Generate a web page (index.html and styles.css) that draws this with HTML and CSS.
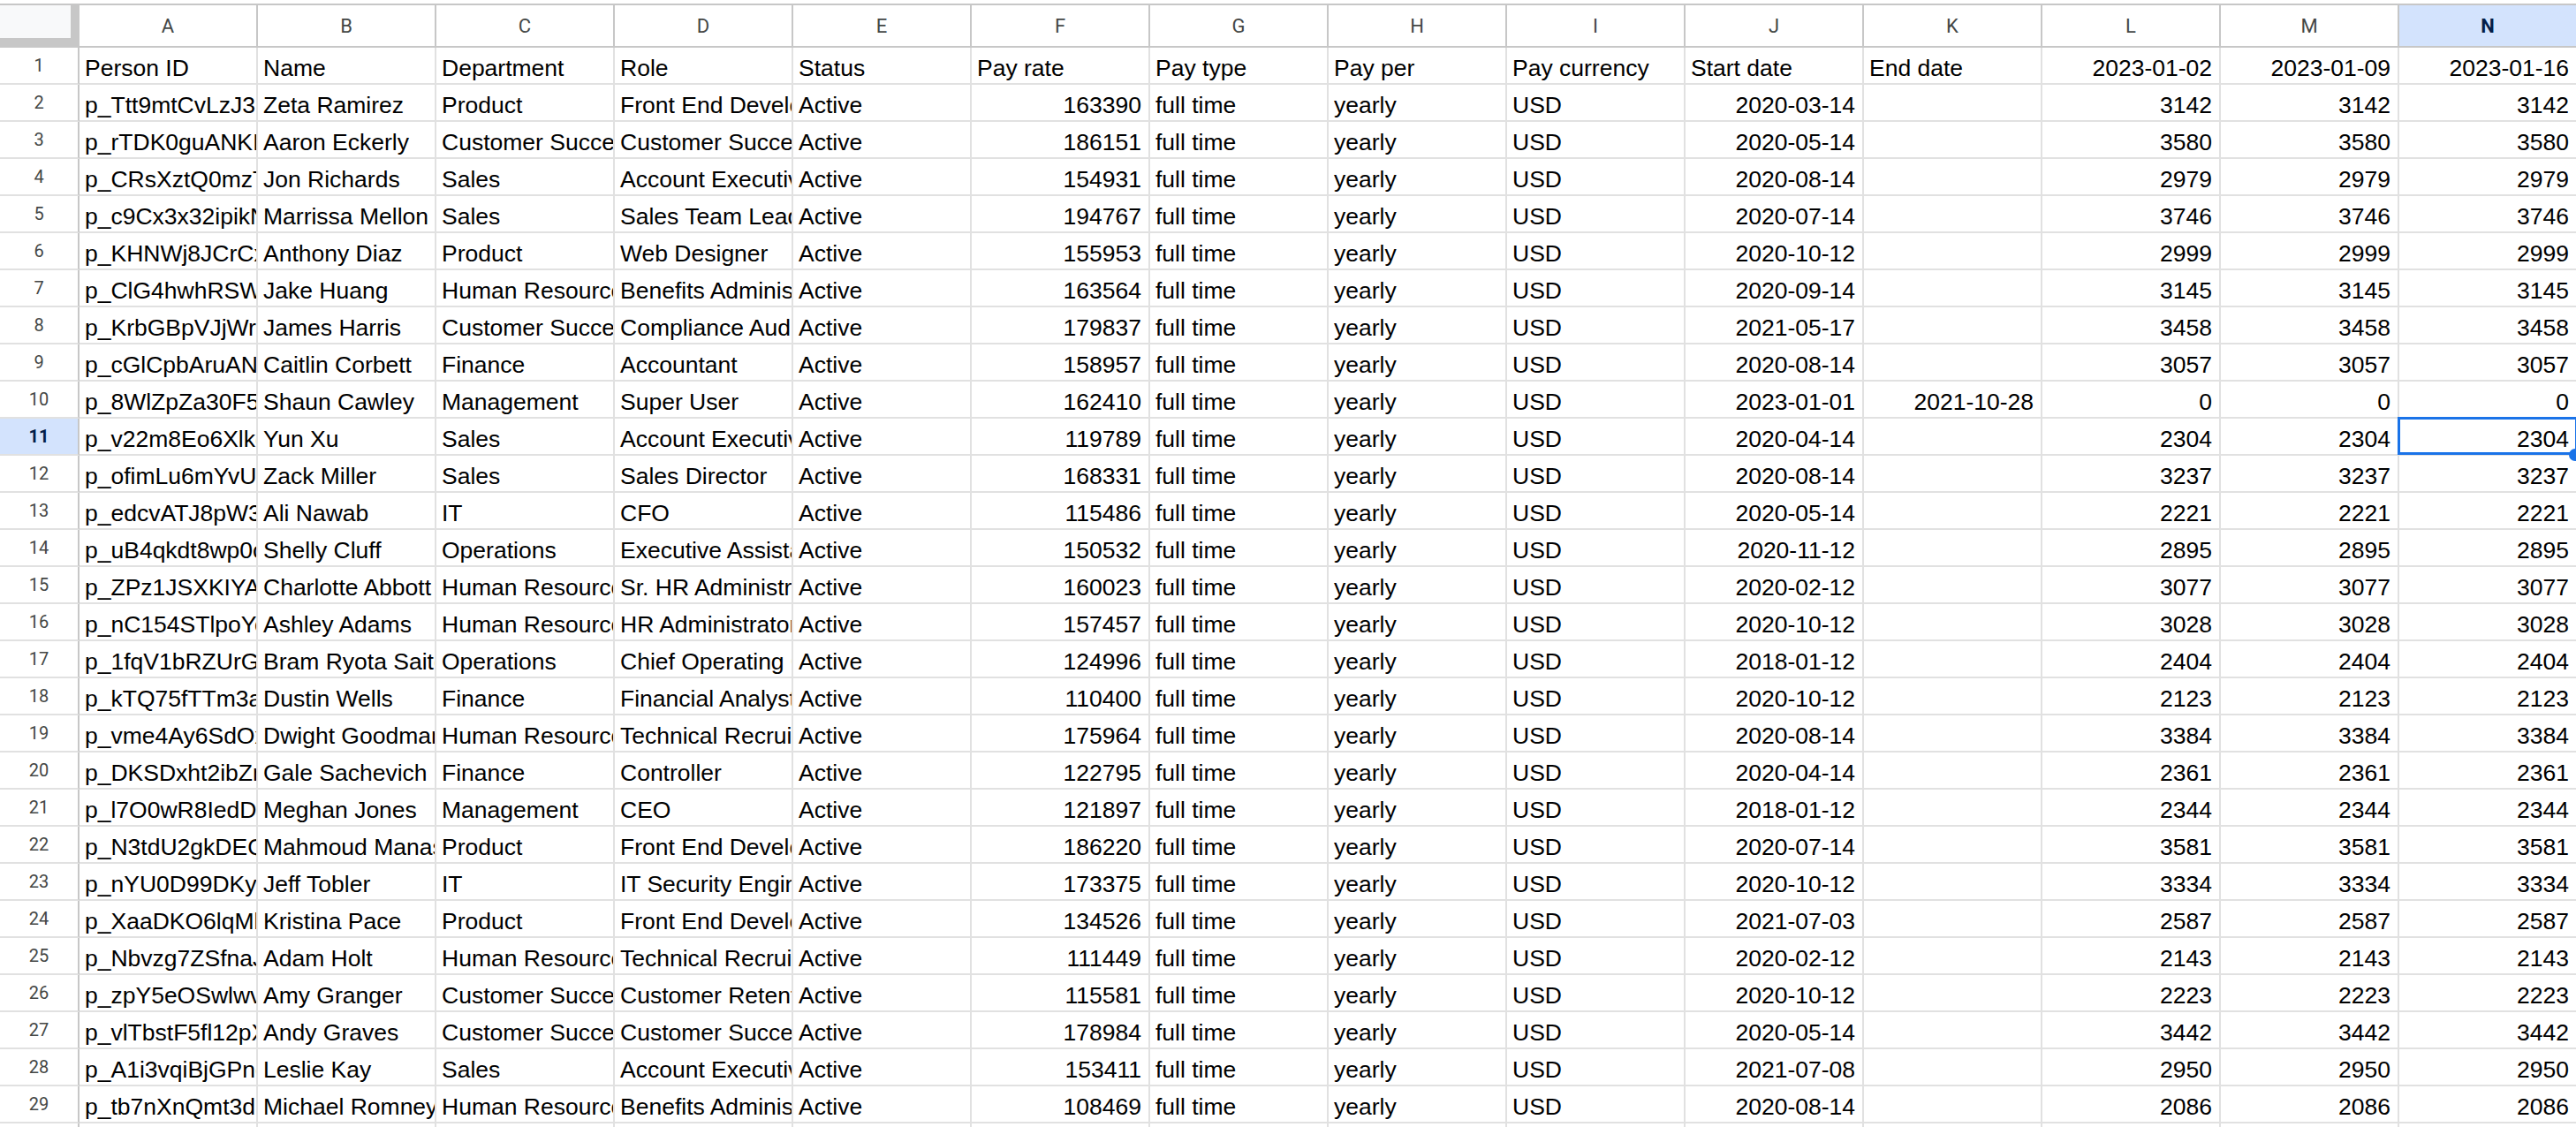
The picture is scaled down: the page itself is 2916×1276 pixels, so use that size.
FILE: index.html
```html
<!DOCTYPE html>
<html>
<head>
<meta charset="utf-8">
<title>Sheet</title>
<link rel="stylesheet" href="styles.css">
</head>
<body>
<div class="sheet">
<div class="corner"></div><div class="colhead">A</div><div class="colhead">B</div><div class="colhead">C</div><div class="colhead">D</div><div class="colhead">E</div><div class="colhead">F</div><div class="colhead">G</div><div class="colhead">H</div><div class="colhead">I</div><div class="colhead">J</div><div class="colhead">K</div><div class="colhead">L</div><div class="colhead">M</div><div class="colhead active-head">N</div>

<div class="rownum">1</div><div class="cell">Person ID</div><div class="cell">Name</div><div class="cell">Department</div><div class="cell">Role</div><div class="cell">Status</div><div class="cell">Pay rate</div><div class="cell">Pay type</div><div class="cell">Pay per</div><div class="cell">Pay currency</div><div class="cell">Start date</div><div class="cell">End date</div><div class="cell num">2023-01-02</div><div class="cell num">2023-01-09</div><div class="cell num">2023-01-16</div>

<div class="rownum">2</div><div class="cell">p_Ttt9mtCvLzJ3kQ</div><div class="cell">Zeta Ramirez</div><div class="cell">Product</div><div class="cell">Front End Developer</div><div class="cell">Active</div><div class="cell num">163390</div><div class="cell">full time</div><div class="cell">yearly</div><div class="cell">USD</div><div class="cell num">2020-03-14</div><div class="cell"></div><div class="cell num">3142</div><div class="cell num">3142</div><div class="cell num">3142</div>

<div class="rownum">3</div><div class="cell">p_rTDK0guANKIs</div><div class="cell">Aaron Eckerly</div><div class="cell">Customer Success</div><div class="cell">Customer Success Manager</div><div class="cell">Active</div><div class="cell num">186151</div><div class="cell">full time</div><div class="cell">yearly</div><div class="cell">USD</div><div class="cell num">2020-05-14</div><div class="cell"></div><div class="cell num">3580</div><div class="cell num">3580</div><div class="cell num">3580</div>

<div class="rownum">4</div><div class="cell">p_CRsXztQ0mzTj</div><div class="cell">Jon Richards</div><div class="cell">Sales</div><div class="cell">Account Executive</div><div class="cell">Active</div><div class="cell num">154931</div><div class="cell">full time</div><div class="cell">yearly</div><div class="cell">USD</div><div class="cell num">2020-08-14</div><div class="cell"></div><div class="cell num">2979</div><div class="cell num">2979</div><div class="cell num">2979</div>

<div class="rownum">5</div><div class="cell">p_c9Cx3x32ipikN</div><div class="cell">Marrissa Mellon</div><div class="cell">Sales</div><div class="cell">Sales Team Lead</div><div class="cell">Active</div><div class="cell num">194767</div><div class="cell">full time</div><div class="cell">yearly</div><div class="cell">USD</div><div class="cell num">2020-07-14</div><div class="cell"></div><div class="cell num">3746</div><div class="cell num">3746</div><div class="cell num">3746</div>

<div class="rownum">6</div><div class="cell">p_KHNWj8JCrCxq</div><div class="cell">Anthony Diaz</div><div class="cell">Product</div><div class="cell">Web Designer</div><div class="cell">Active</div><div class="cell num">155953</div><div class="cell">full time</div><div class="cell">yearly</div><div class="cell">USD</div><div class="cell num">2020-10-12</div><div class="cell"></div><div class="cell num">2999</div><div class="cell num">2999</div><div class="cell num">2999</div>

<div class="rownum">7</div><div class="cell">p_ClG4hwhRSWnv</div><div class="cell">Jake Huang</div><div class="cell">Human Resources</div><div class="cell">Benefits Administrator</div><div class="cell">Active</div><div class="cell num">163564</div><div class="cell">full time</div><div class="cell">yearly</div><div class="cell">USD</div><div class="cell num">2020-09-14</div><div class="cell"></div><div class="cell num">3145</div><div class="cell num">3145</div><div class="cell num">3145</div>

<div class="rownum">8</div><div class="cell">p_KrbGBpVJjWrk</div><div class="cell">James Harris</div><div class="cell">Customer Success</div><div class="cell">Compliance Auditor</div><div class="cell">Active</div><div class="cell num">179837</div><div class="cell">full time</div><div class="cell">yearly</div><div class="cell">USD</div><div class="cell num">2021-05-17</div><div class="cell"></div><div class="cell num">3458</div><div class="cell num">3458</div><div class="cell num">3458</div>

<div class="rownum">9</div><div class="cell">p_cGlCpbAruANv</div><div class="cell">Caitlin Corbett</div><div class="cell">Finance</div><div class="cell">Accountant</div><div class="cell">Active</div><div class="cell num">158957</div><div class="cell">full time</div><div class="cell">yearly</div><div class="cell">USD</div><div class="cell num">2020-08-14</div><div class="cell"></div><div class="cell num">3057</div><div class="cell num">3057</div><div class="cell num">3057</div>

<div class="rownum">10</div><div class="cell">p_8WlZpZa30F5x</div><div class="cell">Shaun Cawley</div><div class="cell">Management</div><div class="cell">Super User</div><div class="cell">Active</div><div class="cell num">162410</div><div class="cell">full time</div><div class="cell">yearly</div><div class="cell">USD</div><div class="cell num">2023-01-01</div><div class="cell num">2021-10-28</div><div class="cell num">0</div><div class="cell num">0</div><div class="cell num">0</div>

<div class="rownum active-head">11</div><div class="cell">p_v22m8Eo6Xlkq</div><div class="cell">Yun Xu</div><div class="cell">Sales</div><div class="cell">Account Executive</div><div class="cell">Active</div><div class="cell num">119789</div><div class="cell">full time</div><div class="cell">yearly</div><div class="cell">USD</div><div class="cell num">2020-04-14</div><div class="cell"></div><div class="cell num">2304</div><div class="cell num">2304</div><div class="cell num selected">2304<span class="fill-handle"></span></div>

<div class="rownum">12</div><div class="cell">p_ofimLu6mYvUh</div><div class="cell">Zack Miller</div><div class="cell">Sales</div><div class="cell">Sales Director</div><div class="cell">Active</div><div class="cell num">168331</div><div class="cell">full time</div><div class="cell">yearly</div><div class="cell">USD</div><div class="cell num">2020-08-14</div><div class="cell"></div><div class="cell num">3237</div><div class="cell num">3237</div><div class="cell num">3237</div>

<div class="rownum">13</div><div class="cell">p_edcvATJ8pW3t</div><div class="cell">Ali Nawab</div><div class="cell">IT</div><div class="cell">CFO</div><div class="cell">Active</div><div class="cell num">115486</div><div class="cell">full time</div><div class="cell">yearly</div><div class="cell">USD</div><div class="cell num">2020-05-14</div><div class="cell"></div><div class="cell num">2221</div><div class="cell num">2221</div><div class="cell num">2221</div>

<div class="rownum">14</div><div class="cell">p_uB4qkdt8wp0c</div><div class="cell">Shelly Cluff</div><div class="cell">Operations</div><div class="cell">Executive Assistant</div><div class="cell">Active</div><div class="cell num">150532</div><div class="cell">full time</div><div class="cell">yearly</div><div class="cell">USD</div><div class="cell num">2020-11-12</div><div class="cell"></div><div class="cell num">2895</div><div class="cell num">2895</div><div class="cell num">2895</div>

<div class="rownum">15</div><div class="cell">p_ZPz1JSXKIYAg</div><div class="cell">Charlotte Abbott</div><div class="cell">Human Resources</div><div class="cell">Sr. HR Administrator</div><div class="cell">Active</div><div class="cell num">160023</div><div class="cell">full time</div><div class="cell">yearly</div><div class="cell">USD</div><div class="cell num">2020-02-12</div><div class="cell"></div><div class="cell num">3077</div><div class="cell num">3077</div><div class="cell num">3077</div>

<div class="rownum">16</div><div class="cell">p_nC154STlpoYe</div><div class="cell">Ashley Adams</div><div class="cell">Human Resources</div><div class="cell">HR Administrator</div><div class="cell">Active</div><div class="cell num">157457</div><div class="cell">full time</div><div class="cell">yearly</div><div class="cell">USD</div><div class="cell num">2020-10-12</div><div class="cell"></div><div class="cell num">3028</div><div class="cell num">3028</div><div class="cell num">3028</div>

<div class="rownum">17</div><div class="cell">p_1fqV1bRZUrGd</div><div class="cell">Bram Ryota Saito</div><div class="cell">Operations</div><div class="cell">Chief Operating Officer</div><div class="cell">Active</div><div class="cell num">124996</div><div class="cell">full time</div><div class="cell">yearly</div><div class="cell">USD</div><div class="cell num">2018-01-12</div><div class="cell"></div><div class="cell num">2404</div><div class="cell num">2404</div><div class="cell num">2404</div>

<div class="rownum">18</div><div class="cell">p_kTQ75fTTm3aw</div><div class="cell">Dustin Wells</div><div class="cell">Finance</div><div class="cell">Financial Analyst</div><div class="cell">Active</div><div class="cell num">110400</div><div class="cell">full time</div><div class="cell">yearly</div><div class="cell">USD</div><div class="cell num">2020-10-12</div><div class="cell"></div><div class="cell num">2123</div><div class="cell num">2123</div><div class="cell num">2123</div>

<div class="rownum">19</div><div class="cell">p_vme4Ay6SdOxk</div><div class="cell">Dwight Goodman</div><div class="cell">Human Resources</div><div class="cell">Technical Recruiter</div><div class="cell">Active</div><div class="cell num">175964</div><div class="cell">full time</div><div class="cell">yearly</div><div class="cell">USD</div><div class="cell num">2020-08-14</div><div class="cell"></div><div class="cell num">3384</div><div class="cell num">3384</div><div class="cell num">3384</div>

<div class="rownum">20</div><div class="cell">p_DKSDxht2ibZr</div><div class="cell">Gale Sachevich</div><div class="cell">Finance</div><div class="cell">Controller</div><div class="cell">Active</div><div class="cell num">122795</div><div class="cell">full time</div><div class="cell">yearly</div><div class="cell">USD</div><div class="cell num">2020-04-14</div><div class="cell"></div><div class="cell num">2361</div><div class="cell num">2361</div><div class="cell num">2361</div>

<div class="rownum">21</div><div class="cell">p_l7O0wR8IedDu</div><div class="cell">Meghan Jones</div><div class="cell">Management</div><div class="cell">CEO</div><div class="cell">Active</div><div class="cell num">121897</div><div class="cell">full time</div><div class="cell">yearly</div><div class="cell">USD</div><div class="cell num">2018-01-12</div><div class="cell"></div><div class="cell num">2344</div><div class="cell num">2344</div><div class="cell num">2344</div>

<div class="rownum">22</div><div class="cell">p_N3tdU2gkDEQm</div><div class="cell">Mahmoud Manasrah</div><div class="cell">Product</div><div class="cell">Front End Developer</div><div class="cell">Active</div><div class="cell num">186220</div><div class="cell">full time</div><div class="cell">yearly</div><div class="cell">USD</div><div class="cell num">2020-07-14</div><div class="cell"></div><div class="cell num">3581</div><div class="cell num">3581</div><div class="cell num">3581</div>

<div class="rownum">23</div><div class="cell">p_nYU0D99DKyfz</div><div class="cell">Jeff Tobler</div><div class="cell">IT</div><div class="cell">IT Security Engineer</div><div class="cell">Active</div><div class="cell num">173375</div><div class="cell">full time</div><div class="cell">yearly</div><div class="cell">USD</div><div class="cell num">2020-10-12</div><div class="cell"></div><div class="cell num">3334</div><div class="cell num">3334</div><div class="cell num">3334</div>

<div class="rownum">24</div><div class="cell">p_XaaDKO6lqMbs</div><div class="cell">Kristina Pace</div><div class="cell">Product</div><div class="cell">Front End Developer</div><div class="cell">Active</div><div class="cell num">134526</div><div class="cell">full time</div><div class="cell">yearly</div><div class="cell">USD</div><div class="cell num">2021-07-03</div><div class="cell"></div><div class="cell num">2587</div><div class="cell num">2587</div><div class="cell num">2587</div>

<div class="rownum">25</div><div class="cell">p_Nbvzg7ZSfnaJ</div><div class="cell">Adam Holt</div><div class="cell">Human Resources</div><div class="cell">Technical Recruiter</div><div class="cell">Active</div><div class="cell num">111449</div><div class="cell">full time</div><div class="cell">yearly</div><div class="cell">USD</div><div class="cell num">2020-02-12</div><div class="cell"></div><div class="cell num">2143</div><div class="cell num">2143</div><div class="cell num">2143</div>

<div class="rownum">26</div><div class="cell">p_zpY5eOSwlwvT</div><div class="cell">Amy Granger</div><div class="cell">Customer Success</div><div class="cell">Customer Retention Specialist</div><div class="cell">Active</div><div class="cell num">115581</div><div class="cell">full time</div><div class="cell">yearly</div><div class="cell">USD</div><div class="cell num">2020-10-12</div><div class="cell"></div><div class="cell num">2223</div><div class="cell num">2223</div><div class="cell num">2223</div>

<div class="rownum">27</div><div class="cell">p_vlTbstF5fl12pX</div><div class="cell">Andy Graves</div><div class="cell">Customer Success</div><div class="cell">Customer Success Manager</div><div class="cell">Active</div><div class="cell num">178984</div><div class="cell">full time</div><div class="cell">yearly</div><div class="cell">USD</div><div class="cell num">2020-05-14</div><div class="cell"></div><div class="cell num">3442</div><div class="cell num">3442</div><div class="cell num">3442</div>

<div class="rownum">28</div><div class="cell">p_A1i3vqiBjGPnc</div><div class="cell">Leslie Kay</div><div class="cell">Sales</div><div class="cell">Account Executive</div><div class="cell">Active</div><div class="cell num">153411</div><div class="cell">full time</div><div class="cell">yearly</div><div class="cell">USD</div><div class="cell num">2021-07-08</div><div class="cell"></div><div class="cell num">2950</div><div class="cell num">2950</div><div class="cell num">2950</div>

<div class="rownum">29</div><div class="cell">p_tb7nXnQmt3dLr</div><div class="cell">Michael Romney</div><div class="cell">Human Resources</div><div class="cell">Benefits Administrator</div><div class="cell">Active</div><div class="cell num">108469</div><div class="cell">full time</div><div class="cell">yearly</div><div class="cell">USD</div><div class="cell num">2020-08-14</div><div class="cell"></div><div class="cell num">2086</div><div class="cell num">2086</div><div class="cell num">2086</div>

<div class="rownum">30</div><div class="cell"></div><div class="cell"></div><div class="cell"></div><div class="cell"></div><div class="cell"></div><div class="cell"></div><div class="cell"></div><div class="cell"></div><div class="cell"></div><div class="cell"></div><div class="cell"></div><div class="cell"></div><div class="cell"></div><div class="cell"></div>
</div>
</body>
</html>
```

FILE: styles.css
```css
html, body {
  margin: 0;
  padding: 0;
  background: #ffffff;
  overflow: hidden;
}

body {
  font-family: "Liberation Sans", Arial, sans-serif;
  color: #000000;
}

.sheet {
  margin-top: 4px;
  border-top: 2px solid #c7c7c7;
  display: grid;
  grid-template-columns: 90px repeat(14, 202px);
  grid-template-rows: 48px;
  grid-auto-rows: 42px;
  width: max-content;
}

.corner {
  box-sizing: border-box;
  background: #f8f9fa;
  border-right: 10px solid #c7c7c7;
  border-bottom: 11px solid #c7c7c7;
}

.colhead {
  box-sizing: border-box;
  border-right: 2px solid #c7c7c7;
  border-bottom: 2px solid #c7c7c7;
  font-family: Roboto, "Liberation Sans", sans-serif;
  font-size: 22px;
  color: #444746;
  text-align: center;
  line-height: 48px;
  background: #ffffff;
}

.rownum {
  box-sizing: border-box;
  border-right: 2px solid #c7c7c7;
  border-bottom: 2px solid #e1e1e1;
  font-family: Roboto, "Liberation Sans", sans-serif;
  font-size: 20px;
  color: #444746;
  text-align: center;
  line-height: 40px;
  background: #ffffff;
}

.active-head {
  background: #d3e3fd;
  color: #041e49;
  font-weight: 700;
}

.cell {
  box-sizing: border-box;
  border-right: 2px solid #e1e1e1;
  border-bottom: 2px solid #e1e1e1;
  padding: 8px 8px 0 6px;
  font-size: 26.5px;
  line-height: 30px;
  white-space: nowrap;
  overflow: hidden;
}

.num {
  text-align: right;
}

.selected {
  position: relative;
  overflow: visible;
  z-index: 2;
}

.selected::after {
  content: "";
  position: absolute;
  top: -2px;
  left: -2px;
  right: -2px;
  bottom: -1px;
  border: 3px solid #1a73e8;
  pointer-events: none;
}

.fill-handle {
  position: absolute;
  left: 192px;
  top: 34px;
  width: 14px;
  height: 14px;
  border-radius: 50%;
  background: #1a73e8;
  z-index: 3;
}
```
